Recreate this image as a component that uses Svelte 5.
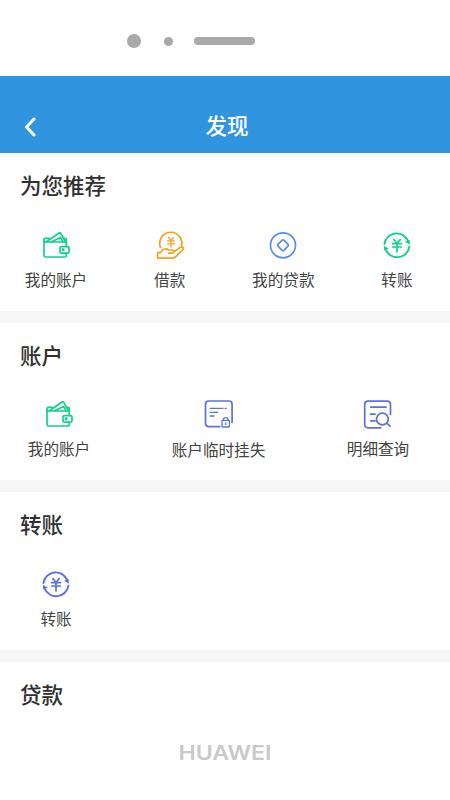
<script lang="ts">
    const green = '#12d08a';
    const orange = '#f5a01e';
    const blue = '#5690e4';
    const indigo = '#5b72dd';

    const sections = [
        {
            title: '为您推荐',
            layout: 'four',
            items: [
                { icon: 'wallet', label: '我的账户', color: green },
                { icon: 'loan', label: '借款', color: orange },
                { icon: 'coin', label: '我的贷款', color: blue },
                { icon: 'transfer', label: '转账', color: green }
            ]
        },
        {
            title: '账户',
            layout: 'three',
            items: [
                { icon: 'wallet', label: '我的账户', color: green },
                { icon: 'lock', label: '账户临时挂失', color: indigo },
                { icon: 'search', label: '明细查询', color: indigo }
            ]
        },
        {
            title: '转账',
            layout: 'four',
            items: [{ icon: 'transfer', label: '转账', color: indigo }]
        },
        { title: '贷款', layout: 'four', items: [] }
    ];
</script>

<div class="phone">
    <div class="speaker">
        <span class="speaker__lens"></span>
        <span class="speaker__dot"></span>
        <span class="speaker__bar"></span>
    </div>

    <header class="header">
        <svg class="header__back" width="14" height="20" viewBox="0 0 14 20">
            <path d="M11 2 L3.5 10 L11 18" />
        </svg>
        <h1>发现</h1>
    </header>

    {#each sections as section}
        <section class="section">
            <h2>{section.title}</h2>
            <div class="items {section.layout}">
                {#each section.items as item}
                    <div class="item">
                        <svg class="icon" width="32" height="32" viewBox="0 0 32 32" style="color: {item.color}">
                            {#if item.icon === 'wallet'}
                                <path d="M26.3 17.5 V13 H4 V26.6 Q4 28 5.4 28 H24.9 Q26.3 28 26.3 26.6 V24.3" />
                                <path d="M4 13 V10.6 Q4 9.3 5.4 9.3 H9.5 M23.5 9.3 H25 Q26.3 9.3 26.3 10.6 V13" />
                                <path d="M6.5 12.8 L19.2 4 Q20.2 3.4 20.8 4.4 L25.3 12.5 M11.5 12.8 L20.6 8.4 L23 12.8" />
                                <rect x="20" y="17.6" width="9" height="6.6" rx="1.4" />
                                <path class="thin" d="M22.5 20 h1.4 v1.7 h-1.4 z" />
                            {:else if item.icon === 'loan'}
                                <path d="M6.4 18.3 A11.1 11.1 0 1 1 27.4 17.6" />
                                <path class="thin" d="M14.6 8.6 L17 11.4 L19.4 8.6 M13.6 11.9 H20.4 M13.6 14.8 H20.4 M17 11.4 V18" />
                                <path d="M4 23.6 H6.6 C8.6 19.6 12 19 14.6 21 H18 Q20.2 21.2 20.1 22.8 L26.4 18.4 Q28.6 17.4 29.3 19 Q29.6 20 28.6 21 L21.2 28.2 Q20.2 29.2 18.6 29.2 H4.4 Q3.6 29.2 3.6 28.4 V24.2 Q3.6 23.6 4 23.6 Z M20.1 22.8 Q19.6 24.2 18 24.2 H14.8" />
                            {:else if item.icon === 'coin'}
                                <circle cx="16" cy="16.3" r="12.5" />
                                <path d="M15.1 11.2 Q16 10.4 16.9 11.2 L21 15.4 Q21.8 16.3 21 17.2 L16.9 21.4 Q16 22.2 15.1 21.4 L11 17.2 Q10.2 16.3 11 15.4 Z" />
                            {:else if item.icon === 'transfer'}
                                <path class="ring" d="M3.4 15 A12.4 12.4 0 0 1 27.2 12.2 M28.4 17.6 A12.4 12.4 0 0 1 4.6 20.4" />
                                <path class="fill" d="M24 12.8 L28.6 11 L29 15.8 Z M7.8 19.8 L3.2 21.6 L2.8 16.8 Z" />
                                <path d="M12.8 10.6 L16 14.2 L19.2 10.6 M11.6 14.7 H20.4 M11.6 18 H20.4 M16 14.2 V22.8" />
                            {:else if item.icon === 'lock'}
                                <path d="M16.8 28.6 H5.8 Q2.5 28.6 2.5 25.3 V6.3 Q2.5 3 5.8 3 H25.8 Q29.1 3 29.1 6.3 V24.3" />
                                <path class="thin" d="M7.2 10.3 H20 M22 10.3 H23.2 M7.2 14.4 H14.6 M7.2 18 H11" />
                                <rect class="thin" x="19" y="22.4" width="7.4" height="6.6" rx=".7" />
                                <path class="thin" d="M20.4 22.2 V21.6 Q20.4 19.6 22.7 19.6 Q25 19.6 25 21.6 V22.2 M22.7 25 V26.4" />
                            {:else}
                                <path d="M18.8 29.8 H6 Q2.7 29.8 2.7 26.5 V6.4 Q2.7 3.1 6 3.1 H25.2 Q28.5 3.1 28.5 6.4 V16.4" />
                                <path d="M8.7 9.1 H24 M8.7 16.2 H13 M8.7 22.8 H13" />
                                <circle cx="20.4" cy="21" r="5.9" />
                                <path d="M24.7 25.2 L28 28.2" />
                            {/if}
                        </svg>
                        <span class="label" class:low={item.icon === 'lock'}>{item.label}</span>
                    </div>
                {/each}
            </div>
        </section>
    {/each}

    <footer class="brand">
        <svg width="100" height="28" viewBox="0 0 100 28">
            <text x="3.5" y="20" textLength="93" lengthAdjust="spacingAndGlyphs">HUAWEI</text>
        </svg>
    </footer>
</div>

<style>
    :global(body) {
        margin: 0;
        background: #fff;
    }

    .phone {
        display: flex;
        flex-direction: column;
        width: 450px;
        height: 800px;
        overflow: hidden;
        background: #fff;
        color: #303030;
        font-family: "Noto Sans CJK SC", sans-serif;
    }

    .speaker {
        display: flex;
        align-items: center;
        flex: none;
        box-sizing: border-box;
        height: 76px;
        padding: 6px 0 0 127px;
    }

    .speaker span {
        background: #a9a9a9;
    }

    .speaker__lens {
        width: 14px;
        height: 14px;
        border-radius: 50%;
    }

    .speaker__dot {
        width: 9px;
        height: 9px;
        margin: 0 21px 0 23px;
        border-radius: 50%;
    }

    .speaker__bar {
        width: 61px;
        height: 8px;
        border-radius: 4px;
    }

    .header {
        display: grid;
        grid-template-columns: 48px 1fr 48px;
        align-items: center;
        flex: none;
        box-sizing: border-box;
        height: 77px;
        padding-top: 24px;
        background: #3194df;
        color: #fff;
    }

    .header__back {
        margin-left: 23px;
        fill: none;
        stroke: #fff;
        stroke-width: 3;
        stroke-linecap: round;
        stroke-linejoin: round;
    }

    h1,
    h2 {
        margin: 0;
        font-size: 21.5px;
        font-weight: 500;
        line-height: 32px;
    }

    h1 {
        padding: 0 0 3px 4px;
        text-align: center;
    }

    .section {
        flex: none;
        box-sizing: border-box;
        height: 169.7px;
        padding-top: 16px;
        border-bottom: 12px solid #f6f6f6;
    }

    .section:last-of-type {
        height: 78px;
        border-bottom: 0;
    }

    h2 {
        padding-left: 20px;
    }

    .items {
        display: flex;
        justify-content: space-between;
        padding-top: 27.5px;
    }

    .four {
        padding-left: 24px;
        padding-right: 21px;
    }

    .three {
        padding-left: 11px;
        padding-right: 24px;
    }

    .item {
        display: flex;
        flex-direction: column;
        align-items: center;
        width: 64px;
    }

    .three .item {
        width: 96px;
    }

    .icon {
        fill: none;
        stroke: currentColor;
        stroke-width: 1.7;
        stroke-linecap: round;
        stroke-linejoin: round;
    }

    .icon .thin {
        stroke-width: 1.3;
    }

    .icon .ring {
        stroke-width: 1.9;
    }

    .icon .fill {
        fill: currentColor;
        stroke: none;
    }

    .label {
        margin-top: 6px;
        color: #424242;
        font-size: 15.6px;
        line-height: 24px;
        white-space: nowrap;
    }

    .label.low {
        margin-top: 7px;
    }

    .brand {
        display: flex;
        justify-content: center;
    }

    .brand text {
        fill: #c9c9c9;
        font-family: Inter, "Liberation Sans", sans-serif;
        font-size: 20px;
        font-weight: 600;
    }
</style>
